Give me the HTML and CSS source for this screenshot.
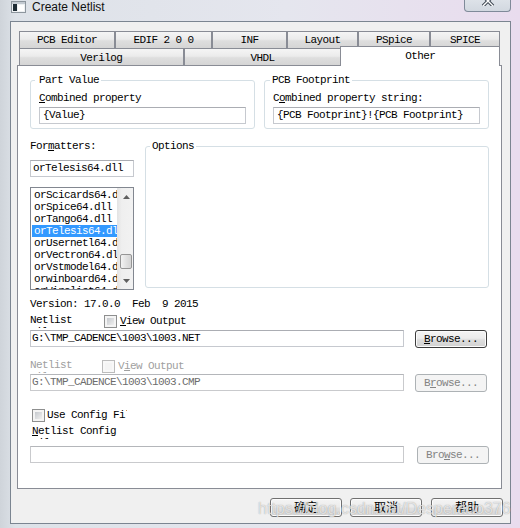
FILE: index.html
```html
<!DOCTYPE html>
<html lang="zh-CN">

<head>
  <meta charset="UTF-8">
  <meta name="viewport" content="width=device-width, initial-scale=1.0">
  <title>Create Netlist</title>

  <link rel="stylesheet" href="styles.css">
</head>

<body>
  <div class="window">
    <div class="titlebar">
      <svg class="app-icon" width="15" height="12" viewBox="0 0 15 12">
        <rect x="0.5" y="0.5" width="14" height="11" fill="#eef1f3" stroke="#8d969e" />
        <rect x="1" y="1" width="13" height="2" fill="#c3cad1" />
        <rect x="2" y="3" width="4" height="7" fill="#1d2b34" />
        <rect x="7" y="4" width="6" height="6" fill="#ffffff" />
      </svg>
      <span class="title">Create Netlist</span>
      <div class="close-btn">
        <svg width="14" height="10" viewBox="0 0 14 10">
          <path d="M2 0 L12 10 M12 0 L2 10" stroke="#3f4853" stroke-width="3.4" />
          <path d="M2 0 L12 10 M12 0 L2 10" stroke="#ffffff" stroke-width="1.4" />
        </svg>
      </div>
    </div>

    <div class="frame">
      <div class="client">
        <!-- 탭 2줄 -->
        <div class="tabs">
          <div class="tab-row">
            <div class="tab w-pcb">PCB Editor</div>
            <div class="tab w-edif">EDIF 2 0 0</div>
            <div class="tab w-inf">INF</div>
            <div class="tab w-layout">Layout</div>
            <div class="tab w-pspice">PSpice</div>
            <div class="tab w-spice">SPICE</div>
          </div>
          <div class="tab-row front">
            <div class="tab w-verilog">Verilog</div>
            <div class="tab w-vhdl">VHDL</div>
            <div class="tab active">Other</div>
          </div>
        </div>

        <div class="panel">
          <div class="group-row">
            <fieldset class="group prop part">
              <legend>Part Value</legend>
              <div class="label"><u>C</u>ombined property</div>
              <div class="field">{Value}</div>
            </fieldset>
            <fieldset class="group prop">
              <legend>PCB Footprint</legend>
              <div class="label">C<u>o</u>mbined property string:</div>
              <div class="field">{PCB Footprint}!{PCB Footprint}</div>
            </fieldset>
          </div>

          <div class="formatter-row">
            <div class="formatters">
              <div class="label">For<u>m</u>atters:</div>
              <div class="field formatter-field">orTelesis64.dll</div>
              <div class="listbox">
                <div class="list-items">
                  <div class="list-item">orScicards64.dll</div>
                  <div class="list-item">orSpice64.dll</div>
                  <div class="list-item">orTango64.dll</div>
                  <div class="list-item selected">orTelesis64.dll</div>
                  <div class="list-item">orUsernetl64.dll</div>
                  <div class="list-item">orVectron64.dll</div>
                  <div class="list-item">orVstmodel64.dll</div>
                  <div class="list-item">orwinboard64.dll</div>
                  <div class="list-item">orWirelist64.dll</div>
                </div>
                <div class="scrollbar">
                  <div class="arrow">
                    <svg width="7" height="4" viewBox="0 0 7 4"><polygon points="0,4 3.5,0 7,4" fill="#5f5f5f" /></svg>
                  </div>
                  <div class="track">
                    <div class="thumb"></div>
                  </div>
                  <div class="arrow">
                    <svg width="7" height="4" viewBox="0 0 7 4"><polygon points="0,0 7,0 3.5,4" fill="#5f5f5f" /></svg>
                  </div>
                </div>
              </div>
            </div>
            <fieldset class="group options">
              <legend>Options</legend>
            </fieldset>
          </div>

          <div class="version">Version: 17.0.0  Feb  9 2015</div>

          <div class="output-row">
            <div class="cut-label">Netlist File:</div>
            <div class="check"></div>
            <div class="check-label"><u>V</u>iew Output</div>
          </div>
          <div class="path-row">
            <div class="field">G:\TMP_CADENCE\1003\1003.NET</div>
            <div class="btn default"><u>B</u>rowse...</div>
          </div>

          <div class="output-row off">
            <div class="cut-label">Netlist File:</div>
            <div class="check"></div>
            <div class="check-label">V<u>i</u>ew Output</div>
          </div>
          <div class="path-row off">
            <div class="field">G:\TMP_CADENCE\1003\1003.CMP</div>
            <div class="btn">B<u>r</u>owse...</div>
          </div>

          <div class="config-row">
            <div class="check"></div>
            <div class="check-label clip">Use Config File</div>
          </div>
          <div class="cut-label config-label"><u>N</u>etlist Config File:</div>
          <div class="path-row off config">
            <div class="field"></div>
            <div class="btn">Bro<u>w</u>se...</div>
          </div>
        </div>

        <div class="buttons">
          <div class="dlg-btn">确定</div>
          <div class="dlg-btn">取消</div>
          <div class="dlg-btn help">帮助</div>
        </div>
      </div>
    </div>
  </div>

  <div class="watermark">https://blog.csdn.net/Desperado376</div>
</body>

</html>
```

FILE: styles.css
```css
* {
  box-sizing: border-box;
}

html,
body {
  margin: 0;
}

body {
  position: relative;
  width: 520px;
  height: 528px;
  overflow: hidden;
  background: linear-gradient(90deg, #cfd4da 0, #dde2e8 3%, #e5e6ee 55%, #e9dcee 100%);
  /* 대화상자 글꼴: 6px 고정폭 */
  font-family: "Liberation Mono", "DejaVu Sans Mono", monospace;
  font-size: 11px;
  letter-spacing: -0.6px;
  color: #000;
}

u {
  text-decoration-thickness: 1px;
  text-underline-offset: 1px;
}

/* ---------- title bar ---------- */
.titlebar {
  height: 21px;
  display: flex;
  align-items: flex-start;
  padding-left: 11px;
}

.app-icon {
  margin-top: 1px;
}

.title {
  margin-left: 6px;
  font-family: "Liberation Sans", Arial, sans-serif;
  font-size: 12px;
  letter-spacing: 0;
  line-height: 14px;
  color: #111;
}

.close-btn {
  margin: -9px 9px 0 auto;
  width: 47px;
  height: 21px;
  border: 1px solid #7f8a99;
  border-top: none;
  border-radius: 0 0 4px 4px;
  background: linear-gradient(#e6eaef, #d2d8e0);
  display: flex;
  align-items: flex-end;
  justify-content: center;
  padding-bottom: 5px;
  overflow: hidden;
}

/* ---------- client area ---------- */
.frame {
  display: flex;
  padding-left: 10px;
}

.client {
  width: 501px;
  height: 503px;
  border: 1px solid #7b8591;
  background: #f0f0f0;
  padding: 9px 8px 0 6px;
  display: flex;
  flex-direction: column;
}

/* ---------- tabs ---------- */
.tabs {
  margin: 0 2px;
}

.tab-row {
  display: flex;
  height: 17px;
}

.tab {
  height: 17px;
  border: 1px solid #898c95;
  border-bottom: none;
  background: linear-gradient(#f5f5f5, #ebebeb 45%, #dedede 55%, #d5d5d5);
  text-align: center;
  line-height: 16px;
  white-space: nowrap;
}

.front .tab {
  line-height: 18px;
}

.w-pcb { width: 96px; }
.w-edif { width: 97px; }
.w-inf { width: 75px; }
.w-layout { width: 71px; }
.w-pspice { width: 72px; }
.w-spice { width: 70px; }
.w-verilog { width: 165px; }
.w-vhdl { width: 158px; }

/* 선택된 탭은 패널 위 테두리를 덮음 */
.front .tab.active {
  position: relative;
  z-index: 1;
  width: 160px;
  height: 20px;
  margin: -2px 0 0 -1px;
  background: #fff;
  line-height: 19px;
}

.panel {
  height: 424px;
  border: 1px solid #898c95;
  background: #fff;
  padding: 8px 11px 0 12px;
}

/* ---------- group boxes ---------- */
.group-row {
  display: flex;
  gap: 9px;
}

.group {
  margin: 0;
  min-width: 0;
  border: 1px solid #d5dfe5;
  border-radius: 3px;
  padding: 6px 8px 0;
}

.group legend {
  margin-left: -3px;
  padding: 0 2px;
  line-height: 12px;
}

.group.part legend {
  margin-left: -4px;
  padding-left: 4px;
}

.group.options legend {
  margin-left: -4px;
}

.group.prop {
  width: 225px;
  height: 55px;
}

.label {
  line-height: 12px;
  white-space: nowrap;
}

.field {
  height: 17px;
  border: 1px solid #c6c9cf;
  border-top-color: #abadb3;
  background: #fff;
  padding-left: 3px;
  line-height: 15px;
  white-space: nowrap;
  overflow: hidden;
}

.prop .field {
  width: 207px;
  margin-top: 3px;
}

/* ---------- formatters ---------- */
.formatter-row {
  display: flex;
  margin-top: 11px;
}

.formatters {
  width: 104px;
}

.formatter-field {
  margin-top: 8px;
  padding-left: 2px;
}

.group.options {
  width: 344px;
  height: 148px;
  margin-left: 11px;
}

.listbox {
  display: flex;
  height: 103px;
  margin-top: 10px;
  border: 1px solid #828790;
  background: #fff;
}

.list-items {
  width: 86px;
  padding-top: 1px;
  overflow: hidden;
}

.list-item {
  margin-left: 1px;
  padding-left: 2px;
  line-height: 12px;
  white-space: nowrap;
  overflow: hidden;
}

.list-item.selected {
  background: #3399ff;
  color: #fff;
}

.scrollbar {
  width: 16px;
  display: flex;
  flex-direction: column;
  background: linear-gradient(90deg, #e3e3e3, #efefef 30%, #f2f2f2);
}

.arrow {
  height: 17px;
  display: flex;
  align-items: center;
  justify-content: center;
  padding-left: 2px;
}

.track {
  flex: 1;
}

.thumb {
  height: 15px;
  margin: 49px 1px 0 3px;
  border: 1px solid #959595;
  border-radius: 2px;
  background: linear-gradient(90deg, #f3f3f3, #e2e2e2 50%, #d4d4d4);
}

/* ---------- netlist file rows ---------- */
.version {
  margin-top: 8px;
  line-height: 12px;
  white-space: pre;
}

.output-row {
  display: flex;
  align-items: flex-start;
  margin-top: 4px;
}

.output-row.off {
  margin-top: 11px;
}

/* 글자가 잘린 라벨: 두 번째 줄 윗부분만 보임 */
.cut-label {
  width: 50px;
  height: 14px;
  line-height: 12px;
  overflow: hidden;
}

.check {
  width: 13px;
  height: 13px;
  margin: 1px 0 0 24px;
  border: 1px solid #8e8f8f;
  background: linear-gradient(135deg, #b9bec4, #eeeeee 80%);
  box-shadow: inset 0 0 0 2px #f4f4f4;
}

.output-row.off .check {
  margin-left: 22px;
  border-color: #bcbcbc;
  background: #f4f4f4;
  box-shadow: inset 0 0 0 2px #f8f8f8;
}

.check-label {
  margin-left: 3px;
  line-height: 14px;
  white-space: nowrap;
}

.path-row {
  display: flex;
  align-items: flex-start;
  margin-top: 2px;
}

.path-row.off {
  margin-top: 1px;
}

.path-row .field {
  width: 374px;
  padding-left: 1px;
}

.btn {
  width: 72px;
  height: 18px;
  margin-left: 11px;
  border: 1px solid #adb2b5;
  border-radius: 3px;
  background: #f4f4f4;
  color: #838383;
  text-align: center;
  line-height: 16px;
}

.btn.default {
  border-color: #3c3c3c;
  background: linear-gradient(#f4f4f4, #ececec 45%, #dddddd 55%, #d2d2d2);
  box-shadow: inset 0 0 0 1px #fbfbfb;
  color: #000;
}

.off .cut-label,
.off .check-label {
  color: #a0a0a0;
}

.off .field {
  color: #6d6d6d;
  border-color: #c9cacd;
  border-top-color: #b4b6ba;
}

.config-row {
  display: flex;
  align-items: flex-start;
  margin: 16px 0 0 2px;
}

.config-row .check {
  margin-left: 0;
}

.check-label.clip {
  width: 80px;
  height: 14px;
  margin-left: 2px;
  overflow: hidden;
}

.config-label {
  width: 90px;
  margin: 3px 0 0 2px;
}

.path-row.config {
  margin-top: 7px;
}

.path-row.config .btn {
  margin-left: 13px;
}

/* ---------- dialog buttons ---------- */
.buttons {
  display: flex;
  justify-content: flex-end;
  gap: 8px;
  margin: 9px -1px 0 0;
}

.dlg-btn {
  width: 72px;
  height: 19px;
  border: 1px solid #707070;
  border-radius: 3px;
  background: linear-gradient(#f4f4f4, #ececec 45%, #e0e0e0 55%, #d6d6d6);
  box-shadow: inset 0 0 0 1px #fcfcfc;
  font-family: "Noto Sans CJK SC", sans-serif;
  font-size: 12px;
  letter-spacing: 0;
  line-height: 16px;
  text-align: center;
}

.dlg-btn.help {
  margin-left: 1px;
}

/* 워터마크 (위에 겹침) */
.watermark {
  position: absolute;
  left: 258px;
  top: 500px;
  font-family: "Liberation Sans", Arial, sans-serif;
  font-size: 16px;
  letter-spacing: 0;
  color: rgba(255, 255, 255, 0.7);
  text-shadow: 0 0 1px rgba(90, 90, 90, 0.6);
  white-space: nowrap;
}
```
